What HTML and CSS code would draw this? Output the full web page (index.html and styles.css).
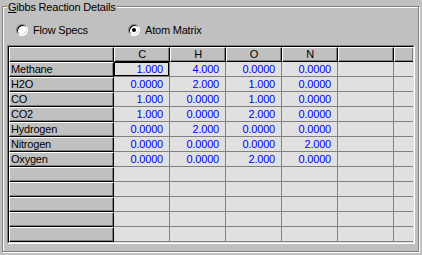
FILE: index.html
```html
<!DOCTYPE html>
<html>
<head>
<meta charset="utf-8">
<link rel="stylesheet" href="styles.css">
</head>
<body>
<div class="page">
  <div class="group">
    <div class="legend"><u>G</u>ibbs Reaction Details</div>
    <div class="options">
      <label class="opt opt-first"><span class="radio"></span><span class="opt-text">Flow Specs</span></label>
      <label class="opt"><span class="radio checked"></span><span class="opt-text">Atom Matrix</span></label>
    </div>
    <div class="frame">
      <div class="grid">
        <div class="hd"></div><div class="hd">C</div><div class="hd">H</div><div class="hd">O</div><div class="hd">N</div><div class="hd"></div><div class="hd last"></div>

        <div class="rh">Methane</div><div class="c sel">1.000</div><div class="c">4.000</div><div class="c">0.0000</div><div class="c">0.0000</div><div class="c"></div><div class="c last"></div>
        <div class="rh">H2O</div><div class="c">0.0000</div><div class="c">2.000</div><div class="c">1.000</div><div class="c">0.0000</div><div class="c"></div><div class="c last"></div>
        <div class="rh">CO</div><div class="c">1.000</div><div class="c">0.0000</div><div class="c">1.000</div><div class="c">0.0000</div><div class="c"></div><div class="c last"></div>
        <div class="rh">CO2</div><div class="c">1.000</div><div class="c">0.0000</div><div class="c">2.000</div><div class="c">0.0000</div><div class="c"></div><div class="c last"></div>
        <div class="rh">Hydrogen</div><div class="c">0.0000</div><div class="c">2.000</div><div class="c">0.0000</div><div class="c">0.0000</div><div class="c"></div><div class="c last"></div>
        <div class="rh">Nitrogen</div><div class="c">0.0000</div><div class="c">0.0000</div><div class="c">0.0000</div><div class="c">2.000</div><div class="c"></div><div class="c last"></div>
        <div class="rh">Oxygen</div><div class="c">0.0000</div><div class="c">0.0000</div><div class="c">2.000</div><div class="c">0.0000</div><div class="c"></div><div class="c last"></div>

        <div class="rh"></div><div class="c"></div><div class="c"></div><div class="c"></div><div class="c"></div><div class="c"></div><div class="c last"></div>
        <div class="rh"></div><div class="c"></div><div class="c"></div><div class="c"></div><div class="c"></div><div class="c"></div><div class="c last"></div>
        <div class="rh"></div><div class="c"></div><div class="c"></div><div class="c"></div><div class="c"></div><div class="c"></div><div class="c last"></div>
        <div class="rh"></div><div class="c"></div><div class="c"></div><div class="c"></div><div class="c"></div><div class="c"></div><div class="c last"></div>
        <div class="rh"></div><div class="c"></div><div class="c"></div><div class="c"></div><div class="c"></div><div class="c"></div><div class="c last"></div>
      </div>
    </div>
  </div>
</div>
</body>
</html>
```
FILE: styles.css
```css
html, body {
  margin: 0;
  padding: 0;
}
body {
  width: 422px;
  height: 255px;
  overflow: hidden;
  background: #c0c0c0;
  font-family: "Liberation Sans", Arial, sans-serif;
  font-size: 11px;
  letter-spacing: -0.2px;
  color: #000;
}
.page {
  padding: 6px 0 0 2px;
}
.group {
  position: relative;
  box-sizing: border-box;
  width: 417px;
  height: 246px;
  border: 1px solid #808080;
  box-shadow: inset 1px 1px 0 #fff, 1px 1px 0 #fff;
  padding: 17px 0 0 4px;
}
.legend {
  position: absolute;
  top: -6px;
  left: 4px;
  padding: 0 1px 0 1px;
  line-height: 13px;
  background: #c0c0c0;
  white-space: nowrap;
}
.legend u {
  text-decoration: underline;
  text-underline-offset: 1px;
}
.options {
  display: flex;
  margin-left: 9px;
  height: 13px;
}
.opt {
  display: flex;
  align-items: flex-start;
  line-height: 13px;
  white-space: nowrap;
}
.opt-first {
  width: 112px;
}
.radio {
  box-sizing: border-box;
  width: 12px;
  height: 12px;
  margin-right: 5px;
  border-radius: 50%;
  border: 1px solid;
  border-color: #808080 #fff #fff #808080;
  background: #fff;
  box-shadow: inset 1px 1px 0 #000, inset -1px -1px 0 #dfdfdf;
  display: flex;
  align-items: center;
  justify-content: center;
}
.radio.checked::after {
  content: "";
  width: 4px;
  height: 4px;
  border-radius: 50%;
  background: #000;
}
.frame {
  box-sizing: border-box;
  width: 408px;
  height: 199px;
  margin-top: 8px;
  border: 1px solid;
  border-color: #808080 #fff #fff #808080;
}
.grid {
  box-sizing: border-box;
  width: 406px;
  height: 197px;
  border: 1px solid;
  border-color: #000 #dfdfdf #dfdfdf #000;
  overflow: hidden;
  background: #e0e0e0;
  display: grid;
  grid-template-columns: 105px repeat(5, 56px) 19px;
  grid-template-rows: repeat(13, 15px);
}
.hd, .rh {
  box-sizing: border-box;
  background: #c0c0c0;
  border-top: 1px solid #fff;
  border-left: 1px solid #fff;
  border-right: 1px solid #000;
  border-bottom: 1px solid #000;
  box-shadow: inset -1px -1px 0 #808080;
  white-space: nowrap;
  overflow: hidden;
}
.hd {
  text-align: center;
  line-height: 12px;
}
.hd.last {
  border-right: none;
}
.rh {
  text-align: left;
  padding-left: 1px;
  line-height: 13px;
}
.c {
  box-sizing: border-box;
  border-right: 1px solid #808080;
  border-bottom: 1px solid #808080;
  text-align: right;
  padding-right: 6px;
  line-height: 14px;
  color: #0000ff;
  white-space: nowrap;
  overflow: hidden;
}
.c.last {
  border-right: none;
}
.c.sel {
  box-shadow: inset 0 0 0 1px #000;
}
```
